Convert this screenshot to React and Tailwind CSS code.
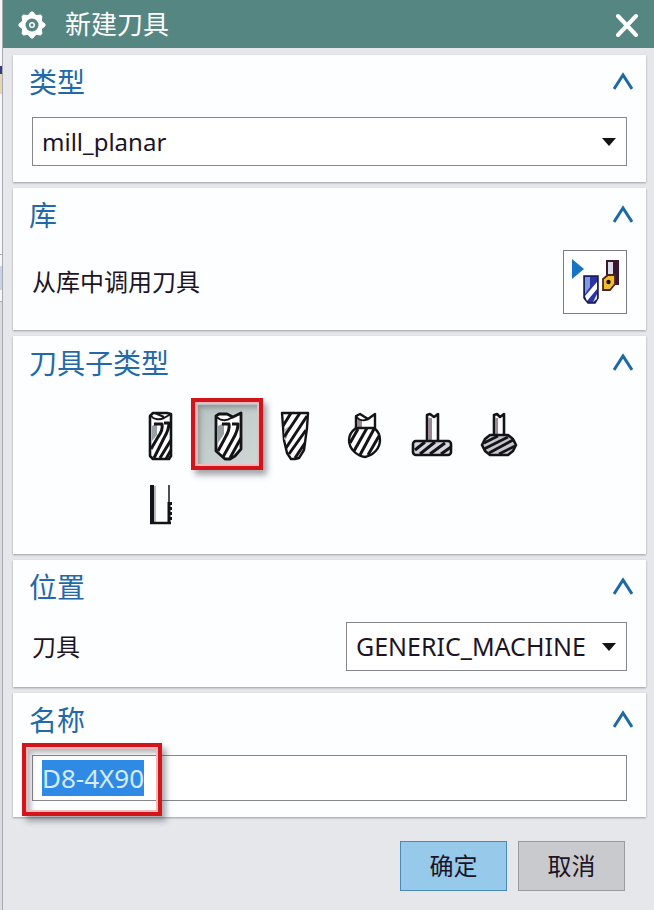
import { useEffect, useRef, useState } from 'react';

const SUBTYPES = [
  { id: 'mill', label: 'MILL', icon: MillIcon },
  { id: 'ball-mill', label: 'BALL_MILL', icon: BallMillIcon },
  { id: 'taper', label: 'CHAMFER_MILL', icon: TaperIcon },
  { id: 'spherical', label: 'SPHERICAL_MILL', icon: SphericalIcon },
  { id: 't-cutter', label: 'T_CUTTER', icon: TCutterIcon },
  { id: 'barrel', label: 'BARREL', icon: BarrelIcon },
  { id: 'thread', label: 'THREAD_MILL', icon: ThreadIcon },
];

export default function App() {
  const [type, setType] = useState('mill_planar');
  const [subtype, setSubtype] = useState('ball-mill');
  const [location, setLocation] = useState('GENERIC_MACHINE');
  const [name, setName] = useState('D8-4X90');
  const nameRef = useRef(null);

  useEffect(() => {
    nameRef.current?.focus();
    nameRef.current?.select();
  }, []);

  return (
    <div className="flex min-h-screen bg-[#e6e7eb] font-['Noto_Sans','Noto_Sans_CJK_SC',sans-serif] text-2xl text-[#1c1426]">
      <BackdropEdge />

      <main className="flex min-w-0 flex-1 flex-col">
        <header className="flex h-12 items-center bg-[#568682] px-3.5 text-white">
          <GearIcon className="size-8" />
          <h1 className="ml-4 flex-1 text-[26px] leading-8">新建刀具</h1>
          <button type="button" aria-label="关闭">
            <svg viewBox="0 0 26 26" className="size-[26px]" fill="none" stroke="currentColor" strokeWidth="4" strokeLinecap="round">
              <path d="M4 5l18 19M22 5L4 24" />
            </svg>
          </button>
        </header>

        <div className="flex flex-col gap-1.5 pt-[7px] pr-2 pl-2.5">
          <Section title="类型">
            <Select label="类型" value={type} onChange={setType} options={['mill_planar', 'mill_contour', 'drill']} className="w-full" />
          </Section>

          <Section title="库">
            <div className="flex items-center justify-between">
              <span id="library-label">从库中调用刀具</span>
              <button type="button" aria-labelledby="library-label" className="flex size-16 items-center justify-center border border-[#7d7d84] bg-white">
                <LibraryIcon className="size-[60px]" />
              </button>
            </div>
          </Section>

          <Section title="刀具子类型">
            <div className="grid grid-cols-[repeat(6,68px)] pt-1 pl-[95px]">
              {SUBTYPES.map(({ id, label, icon: Icon }) => (
                <div key={id} className="relative flex size-[68px] items-center justify-center">
                  <button
                    type="button"
                    aria-label={label}
                    aria-pressed={subtype === id}
                    onClick={() => setSubtype(id)}
                    className={
                      subtype === id
                        ? 'flex size-[62px] items-center justify-center bg-linear-to-br from-[#b9c4c2] to-[#d0d8d6]'
                        : 'flex size-[62px] items-center justify-center'
                    }
                  >
                    <Icon className="h-[52px] w-12" />
                  </button>
                  {id === 'ball-mill' && <Callout className="-top-1 -left-1 size-[72px]" />}
                </div>
              ))}
            </div>
          </Section>

          <Section title="位置">
            <div className="flex items-center justify-between">
              <span>刀具</span>
              <Select label="刀具" value={location} onChange={setLocation} options={['GENERIC_MACHINE', 'NONE']} className="w-[281px] text-[25px]" />
            </div>
          </Section>

          <Section title="名称">
            <div className="relative">
              <input
                ref={nameRef}
                aria-label="名称"
                value={name}
                onChange={(e) => setName(e.target.value)}
                className="block h-[46px] w-full border border-[#85858c] bg-white px-[9px] text-[26px] outline-none selection:bg-[#2f8ae6] selection:text-[#d5ecff]"
              />
              <Callout className="-top-3 -left-2.5 h-[73px] w-[140px]" />
            </div>
          </Section>
        </div>

        <footer className="flex justify-end gap-[11px] pt-6 pr-[29px] pb-5">
          <button type="button" className="h-[50px] w-[107px] border border-[#4a8abb] bg-[#96c9ea]">
            确定
          </button>
          <button type="button" className="h-[50px] w-[107px] border border-[#9a9aa0] bg-[#c9cace]">
            取消
          </button>
        </footer>
      </main>
    </div>
  );
}

function Section({ title, children }) {
  const [open, setOpen] = useState(true);

  return (
    <section className="bg-[#fcfeff] pt-[7px] pb-4 shadow-[0_1px_2px_#9c9ca4]">
      <div className="flex h-10 items-center justify-between pr-[13px] pl-4 text-[#2468a8]">
        <h2 className="text-[28px] leading-10">{title}</h2>
        <button type="button" aria-label={title} aria-expanded={open} onClick={() => setOpen((v) => !v)}>
          <svg viewBox="0 0 20 20" className="size-5" fill="none" stroke="#1c6aa5" strokeWidth="3">
            <path d="M1 17L10 3l9 14" />
          </svg>
        </button>
      </div>
      {open && <div className="px-[19px] pt-[15px]">{children}</div>}
    </section>
  );
}

function Select({ label, value, onChange, options, className }) {
  return (
    <div className={`relative ${className}`}>
      <select
        aria-label={label}
        value={value}
        onChange={(e) => onChange(e.target.value)}
        className="block h-[49px] w-full appearance-none border border-[#85858c] bg-white pr-8 pl-[9px]"
      >
        {options.map((o) => (
          <option key={o}>{o}</option>
        ))}
      </select>
      <svg viewBox="0 0 14 8" className="pointer-events-none absolute top-[21px] right-[11px] h-2 w-3.5" fill="#141414">
        <path d="M0 0h14L7 8z" />
      </svg>
    </div>
  );
}

// Red highlight box drawn over a control
function Callout({ className }) {
  return (
    <div className={`pointer-events-none absolute border-4 border-[#d3141a] shadow-[4px_5px_6px_rgba(60,60,70,0.45),inset_0_0_0_2px_#f3b9bb,inset_5px_6px_5px_rgba(60,60,70,0.35)] ${className}`} />
  );
}

// Sliver of the window that sits behind the dialog
function BackdropEdge() {
  return (
    <div className="flex w-[3px] flex-col border-r border-[#a9a9b2] bg-[#d9dae2]">
      <div className="h-[66px] bg-[#f4f6fa]" />
      <div className="h-2 bg-[#3b3a7c]" />
      <div className="h-5 bg-[#e3d6b4]" />
      <div className="h-40 bg-[#f4f6fa]" />
      <div className="h-3 border-t border-[#a9a9b2] bg-[#f4f6fa]" />
      <div className="h-6 bg-[#c9d3e4]" />
      <div className="h-3 border-b border-[#a9a9b2] bg-[#f4f6fa]" />
    </div>
  );
}

function GearIcon({ className }) {
  return (
    <svg viewBox="0 0 32 32" className={className} aria-hidden="true">
      <g fill="#fff" stroke="#fff" strokeLinejoin="round">
        <circle cx="15" cy="17" r="10.500" />
        <path d="M11 8l3-4h2l3 4v18l-3 4h-2l-3-4z" />
        <path d="M11 8l3-4h2l3 4v18l-3 4h-2l-3-4z" transform="rotate(45 15 17)" />
        <path d="M11 8l3-4h2l3 4v18l-3 4h-2l-3-4z" transform="rotate(90 15 17)" />
        <path d="M11 8l3-4h2l3 4v18l-3 4h-2l-3-4z" transform="rotate(135 15 17)" />
      </g>
      <circle cx="15" cy="17" r="6.500" fill="#568682" />
      <circle cx="15" cy="17" r="3" fill="#fff" />
      <circle cx="15" cy="17" r="1.500" fill="#568682" />
    </svg>
  );
}

function LibraryIcon({ className }) {
  return (
    <svg viewBox="0 0 60 60" className={className} aria-hidden="true">
      <path d="M7 7l12 10L7 27z" fill="#1674c4" />
      <path d="M19 24h14v22l-3 5h-7l-4-5z" fill="#2c34a4" stroke="#14164e" strokeWidth="1.500" />
      <path d="M20 25h5v10l-5 7z" fill="#7f9be0" />
      <path d="M32 30v7L22 49l-2-5z" fill="#fff" />
      <path d="M32 42v5l-4 3z" fill="#dce8ff" />
      <path d="M41 8h13v25H41z" fill="#3b1830" />
      <path d="M43 10h5v16h-5z" fill="#dcdcea" />
      <path d="M38 27l5-4h7v9l-5 6h-7z" fill="#f3bd2d" stroke="#4a2a10" strokeWidth="1.800" />
      <circle cx="43.500" cy="30" r="2.200" fill="#1a1010" />
    </svg>
  );
}

function MillIcon({ className }) {
  return (
    <svg viewBox="0 0 48 52" className={className} fill="#fff" stroke="#141418" strokeWidth="2.600" strokeLinejoin="round" aria-hidden="true">
      <path d="M13 6l3-3h14l4 1v42l-2 3H16l-3-3z" />
      <path d="M15 16l5-3v12l-5 6z" fill="#98a0a4" stroke="none" />
      <path d="M14 6c3 4 9 4 13 2l7-4M18 3l9 4" fill="none" strokeWidth="2" />
      <path d="M17 14h8c1 5-1 9-4 13l-7 12" fill="none" strokeWidth="3" />
      <path d="M27 13h5c0 6-2 10-5 15L17 48" fill="none" strokeWidth="3" />
      <path d="M34 30L23 48M34 40l-5 9" fill="none" strokeWidth="3" />
    </svg>
  );
}

function BallMillIcon({ className }) {
  return (
    <svg viewBox="0 0 48 52" className={className} fill="#fff" stroke="#141418" strokeWidth="2.800" strokeLinejoin="round" aria-hidden="true">
      <path d="M11 6l3-2h8l6 3 8-4v36l-6 7-5 3h-5l-9-8z" />
      <path d="M13 16l6-3v11l-6 9z" fill="#98a0a4" stroke="none" />
      <path d="M12 7c3 4 10 4 14 1l2-1" fill="none" strokeWidth="2" />
      <path d="M17 14h7c1 5-1 9-4 14l-7 13" fill="none" strokeWidth="3" />
      <path d="M27 14h6c0 6-2 10-5 15L18 47" fill="none" strokeWidth="3" />
      <path d="M36 28L25 48" fill="none" strokeWidth="3" />
    </svg>
  );
}

function TaperIcon({ className }) {
  return (
    <svg viewBox="0 0 48 52" className={className} fill="#fff" stroke="#141418" strokeWidth="2.400" strokeLinejoin="round" aria-hidden="true">
      <path d="M9 3h26l-1 15-3 22-5 8-4 1h-4l-4-6-3-13z" />
      <path d="M11 20l5-4-2 12-3 2z" fill="#a8b0b4" stroke="none" />
      <path d="M18 3l-8 13M27 3L11 27M34 6L13 38M33 20L16 44M32 33L22 48" fill="none" strokeWidth="3" />
    </svg>
  );
}

function SphericalIcon({ className }) {
  return (
    <svg viewBox="0 0 48 52" className={className} fill="#fff" stroke="#141418" strokeWidth="2.400" strokeLinejoin="round" aria-hidden="true">
      <path d="M15 20V6l4-2 8 5 7-5v16" />
      <path d="M16 9h5v9h-5z" fill="#9b8a94" stroke="none" />
      <path d="M15 6c3 5 8 5 12 3" fill="none" strokeWidth="2" />
      <path d="M15 18h18c4 3 6 7 6 12 0 8-6 15-15 17-8-1-16-8-16-17 0-5 3-9 7-12z" />
      <path d="M17 19L9 33M26 18L13 41M33 19L19 45M38 26L27 45" fill="none" strokeWidth="3" />
    </svg>
  );
}

function TCutterIcon({ className }) {
  return (
    <svg viewBox="0 0 48 52" className={className} fill="#fff" stroke="#141418" strokeWidth="2.600" strokeLinejoin="round" aria-hidden="true">
      <path d="M18 32V5l3-1 4 3 4-3v28" />
      <path d="M19 8h4v23h-4z" fill="#9b8a94" stroke="none" />
      <rect x="4" y="31" width="38" height="14" rx="3" fill="#d6d4dc" />
      <path d="M16 32L6 40M26 32L11 44M36 33L21 44M42 37l-10 7" fill="none" strokeWidth="3" />
    </svg>
  );
}

function BarrelIcon({ className }) {
  return (
    <svg viewBox="0 0 48 52" className={className} fill="#fff" stroke="#141418" strokeWidth="2.600" strokeLinejoin="round" aria-hidden="true">
      <path d="M17 26V5l3-1 3 3 4-3v22" />
      <path d="M18 8h3v17h-3z" fill="#9b8a94" stroke="none" />
      <path d="M13 25h18l5 4 3 6-3 6-5 4H13l-5-4-3-6 3-6z" fill="#c6c4cc" />
      <path d="M21 26L7 33M31 27L7 39M36 30L12 43M38 36L22 44" fill="none" strokeWidth="2.800" />
    </svg>
  );
}

function ThreadIcon({ className }) {
  return (
    <svg viewBox="0 0 48 52" className={className} fill="none" stroke="#141418" aria-hidden="true">
      <path d="M15 7v38" strokeWidth="4" />
      <path d="M18 8v36" stroke="#a0a4ac" strokeWidth="1.500" />
      <path d="M32 7v18" strokeWidth="1.500" />
      <path d="M13 45h21" strokeWidth="2.500" />
      <path d="M32 24v20" strokeWidth="3" />
      <path d="M34 24v20" strokeWidth="2" strokeDasharray="3 2" />
    </svg>
  );
}
